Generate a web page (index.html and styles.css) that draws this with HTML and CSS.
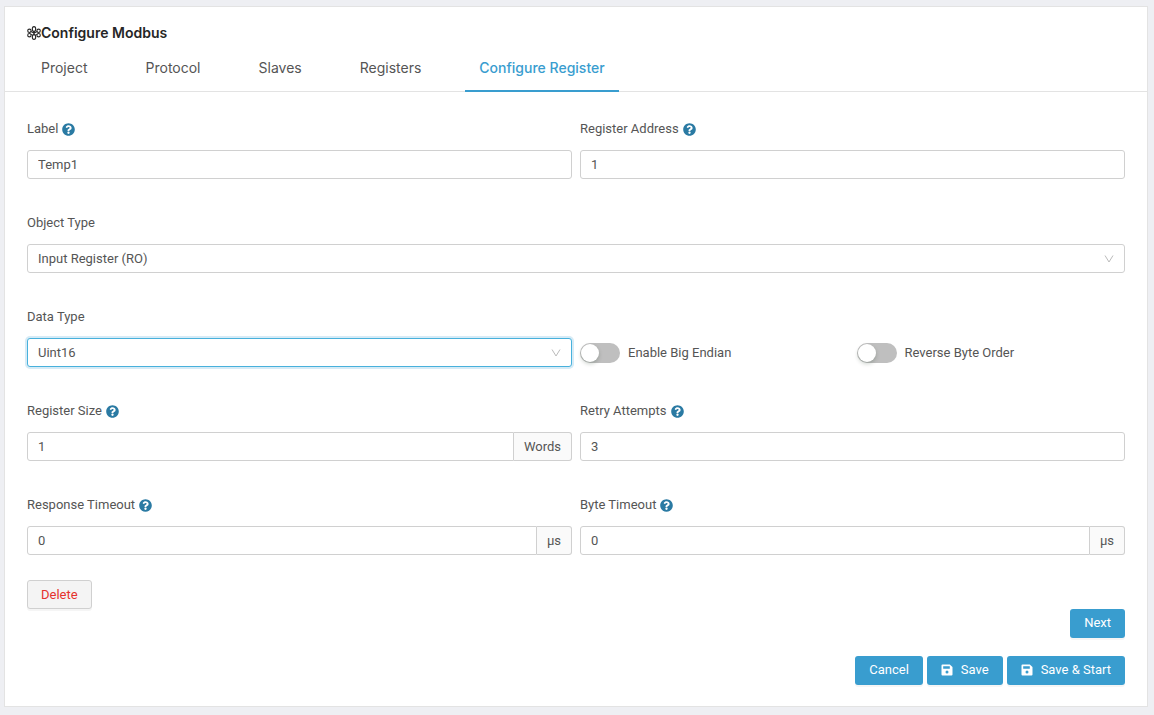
FILE: index.html
```
<!DOCTYPE html>
<html lang="en">
<head>
<meta charset="utf-8">
<title>Configure Modbus</title>
<link rel="stylesheet" href="styles.css">
</head>
<body>
<svg class="sprite" aria-hidden="true">
  <symbol id="help" viewBox="0 0 512 512">
    <path fill="currentColor" d="M504 256c0 137-111 248-248 248S8 393 8 256 119 8 256 8s248 111 248 248zM262.700 90c-54.500 0-89.300 23-116.500 63.800-3.500 5.300-2.400 12.400 2.700 16.300l34.700 26.300c5.200 3.900 12.600 3 16.700-2.100 17.900-22.700 30.100-35.800 57.300-35.800 20.400 0 45.700 13.100 45.700 33 0 15-12.400 22.700-32.500 34C247.100 238.500 216 254.900 216 296v4c0 6.600 5.400 12 12 12h56c6.600 0 12-5.400 12-12v-1.300c0-28.500 83.200-29.600 83.200-106.700 0-58-60.200-102-116.500-102zM256 338c-25.400 0-46 20.600-46 46s20.600 46 46 46 46-20.600 46-46-20.600-46-46-46z"/>
  </symbol>
  <symbol id="chevron" viewBox="0 0 10 10">
    <path fill="none" stroke="currentColor" d="M1 1.500 5 8 9 1.500"/>
  </symbol>
  <symbol id="save" viewBox="0 0 12 12">
    <path fill="currentColor" fill-rule="evenodd" d="M1.500.5h7.300l2.700 2.600v7.400a1 1 0 0 1-1 1h-9a1 1 0 0 1-1-1v-9a1 1 0 0 1 1-1zM2.200 2.300v2.500h6.600V2.300zM6 6.500a1.500 1.500 0 1 0 0 3 1.500 1.500 0 0 0 0-3z"/>
  </symbol>
</svg>
<main class="card">
  <header class="card-header">
    <h1 class="title">
      <svg class="title-icon" viewBox="0 0 14 14" aria-hidden="true">
        <g fill="none" stroke="currentColor" stroke-width="1.100">
          <ellipse cx="7" cy="3" rx="1.700" ry="2.400"/><ellipse cx="7" cy="11" rx="1.700" ry="2.400"/>
          <circle cx="2.400" cy="4.800" r="1.700"/><circle cx="11.600" cy="4.800" r="1.700"/>
          <circle cx="2.400" cy="9.200" r="1.700"/><circle cx="11.600" cy="9.200" r="1.700"/>
          <path d="M7 5v4M3.900 5.500l6.200 3M10.100 5.500l-6.200 3"/>
        </g>
      </svg>Configure Modbus</h1>
    <nav class="tabs">
      <a class="tab" href="#project">Project</a>
      <a class="tab" href="#protocol">Protocol</a>
      <a class="tab" href="#slaves">Slaves</a>
      <a class="tab" href="#registers">Registers</a>
      <a class="tab tab-active" href="#register" aria-current="page">Configure Register</a>
    </nav>
  </header>
  <form class="form">
    <div class="row">
      <div class="field">
        <div class="caption"><label for="label">Label</label><svg class="help"><use href="#help"/></svg></div>
        <input class="control" id="label" type="text" value="Temp1">
      </div>
      <div class="field">
        <div class="caption"><label for="address">Register Address</label><svg class="help"><use href="#help"/></svg></div>
        <input class="control" id="address" type="text" value="1">
      </div>
    </div>
    <div class="field">
      <div class="caption"><label for="object">Object Type</label></div>
      <div class="select">
        <select class="control" id="object"><option>Input Register (RO)</option></select>
        <svg class="chevron"><use href="#chevron"/></svg>
      </div>
    </div>
    <div class="row">
      <div class="field">
        <div class="caption"><label for="data">Data Type</label></div>
        <div class="select">
          <select class="control control-focus" id="data"><option>Uint16</option></select>
          <svg class="chevron"><use href="#chevron"/></svg>
        </div>
      </div>
      <div class="switches">
        <label class="switch-label"><input class="switch" type="checkbox" role="switch">Enable Big Endian</label>
        <label class="switch-label"><input class="switch" type="checkbox" role="switch">Reverse Byte Order</label>
      </div>
    </div>
    <div class="row">
      <div class="field">
        <div class="caption"><label for="size">Register Size</label><svg class="help"><use href="#help"/></svg></div>
        <div class="group"><input class="control" id="size" type="text" value="1"><span class="addon">Words</span></div>
      </div>
      <div class="field">
        <div class="caption"><label for="retry">Retry Attempts</label><svg class="help"><use href="#help"/></svg></div>
        <input class="control" id="retry" type="text" value="3">
      </div>
    </div>
    <div class="row">
      <div class="field">
        <div class="caption"><label for="response">Response Timeout</label><svg class="help"><use href="#help"/></svg></div>
        <div class="group"><input class="control" id="response" type="text" value="0"><span class="addon">µs</span></div>
      </div>
      <div class="field">
        <div class="caption"><label for="byte">Byte Timeout</label><svg class="help"><use href="#help"/></svg></div>
        <div class="group"><input class="control" id="byte" type="text" value="0"><span class="addon">µs</span></div>
      </div>
    </div>
  </form>
  <footer class="footer">
    <div class="actions actions-start"><button class="button button-danger" type="button">Delete</button></div>
    <div class="actions"><button class="button" type="button">Next</button></div>
    <div class="actions actions-final">
      <button class="button" type="button">Cancel</button>
      <button class="button" type="button"><svg class="save"><use href="#save"/></svg>Save</button>
      <button class="button" type="button"><svg class="save"><use href="#save"/></svg>Save &amp; Start</button>
    </div>
  </footer>
</main>
</body>
</html>
```
FILE: styles.css
```
* { box-sizing: border-box; }
body {
  margin: 0;
  padding: 6px 6px 8px 4px;
  background: #eeeff3;
  color: #555;
  font: 13px/20px Roboto, "Liberation Sans", sans-serif;
}
.sprite { display: none; }
.card { background: #fff; border: 1px solid #e3e3e3; }
.card-header {
  padding: 16px 22px 0;
  border-bottom: 1px solid #e3e3e3;
  font-family: Inter, "Liberation Sans", sans-serif;
}
.title {
  display: flex;
  align-items: center;
  margin: 0;
  color: #262626;
  font-size: 14px;
  font-weight: 600;
  line-height: 20px;
}
.title-icon { width: 14px; height: 14px; }
.tabs { display: flex; gap: 30px; margin-bottom: -1px; }
.tab {
  padding: 15px 14px 12px;
  border-bottom: 2px solid transparent;
  color: #555;
  font-size: 14px;
  text-decoration: none;
}
.tab-active { color: #399dcf; border-color: #399dcf; font-weight: 500; }
.form { display: grid; gap: 34px; padding: 27px 22px 25px; }
.row { display: grid; grid-template-columns: 1fr 1fr; gap: 8px; }
.field { display: grid; gap: 11px; min-width: 0; }
.caption { display: flex; align-items: center; gap: 4px; }
.help { width: 13px; height: 13px; color: #2a7aa3; }
.control {
  display: block;
  width: 100%;
  min-width: 0;
  height: 29px;
  padding: 0 10px;
  border: 1px solid #d0d0d0;
  border-radius: 3px;
  background: #fff;
  color: #555;
  font: inherit;
  appearance: none;
}
.control-focus { border-color: #48b1dc; box-shadow: 0 0 0 2px #d6ebf6; }
.select { position: relative; }
.chevron {
  position: absolute;
  top: 10px;
  right: 11px;
  width: 10px;
  height: 10px;
  color: #bbb;
  pointer-events: none;
}
.group { display: flex; }
.group .control { flex: 1; border-radius: 3px 0 0 3px; }
.addon {
  display: flex;
  align-items: center;
  padding: 0 10px;
  border: 1px solid #d0d0d0;
  border-left: 0;
  border-radius: 0 3px 3px 0;
  background: #fafafa;
}
.switches { display: grid; grid-template-columns: 1fr 1fr; gap: 8px; align-self: end; }
.switch-label { display: flex; align-items: center; gap: 8px; height: 29px; }
.switch {
  width: 40px;
  height: 20px;
  margin: 0;
  padding: 1px;
  border-radius: 10px;
  background: #bfbfbf;
  appearance: none;
}
.switch::before {
  content: "";
  display: block;
  width: 18px;
  height: 18px;
  border-radius: 50%;
  background: #fff;
  box-shadow: 0 2px 4px rgba(0, 35, 11, .2);
}
.footer { padding: 0 22px 21px; }
.actions { display: flex; justify-content: flex-end; gap: 4px; }
.actions-start { justify-content: flex-start; }
.actions-final { margin-top: 18px; }
.button {
  display: flex;
  align-items: center;
  gap: 8px;
  height: 29px;
  padding: 0 14px 2px;
  border: 0;
  border-radius: 3px;
  background: #399dcf;
  box-shadow: 0 2px 0 rgba(0, 0, 0, .04);
  color: #fff;
  font: inherit;
}
.button-danger { padding: 0 13px; border: 1px solid #d0d0d0; background: #f4f4f4; color: #e5322d; }
.save { width: 12px; height: 12px; }
```
